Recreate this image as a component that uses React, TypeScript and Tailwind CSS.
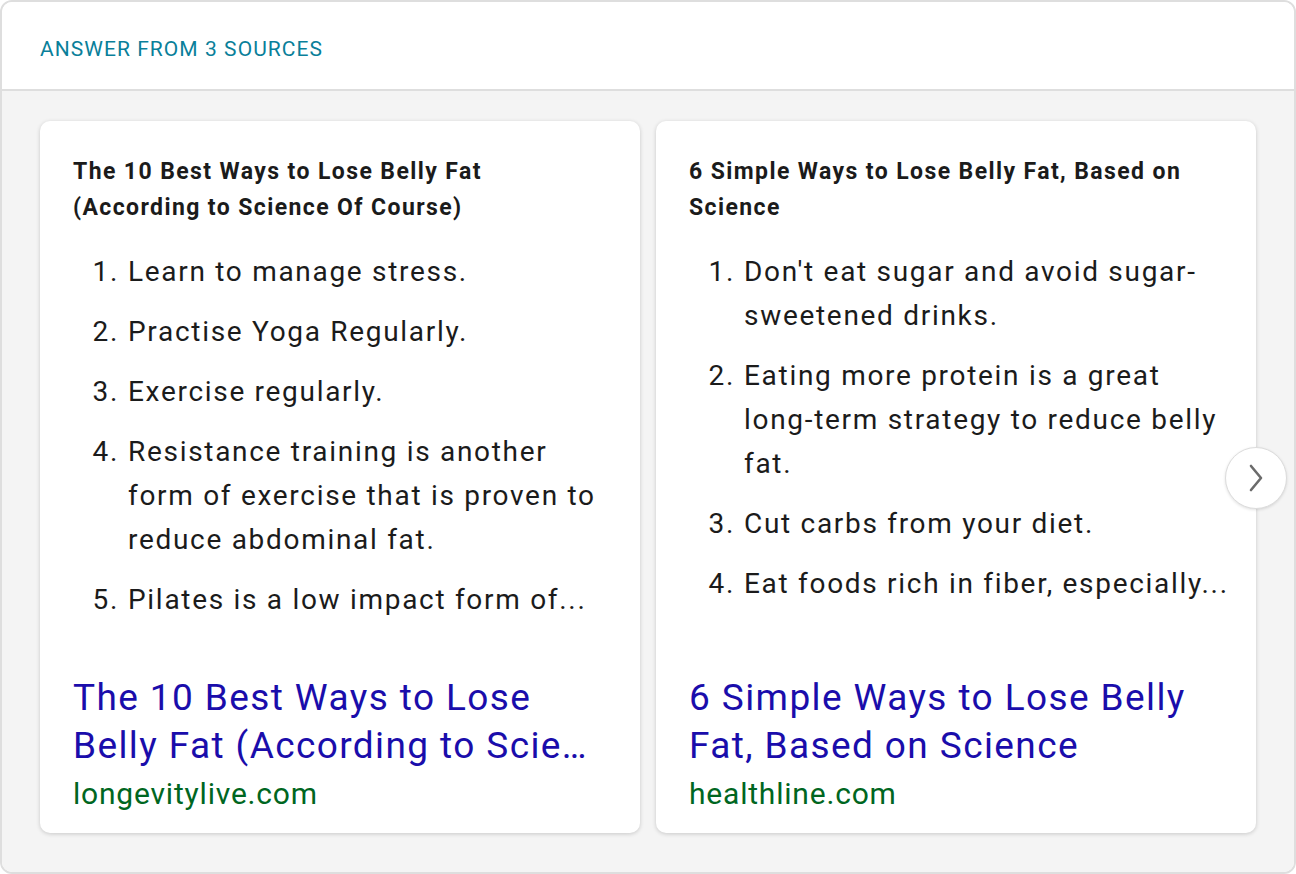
import React from "react";

const cards = [
  {
    title: "The 10 Best Ways to Lose Belly Fat (According to Science Of Course)",
    items: [
      "Learn to manage stress.",
      "Practise Yoga Regularly.",
      "Exercise regularly.",
      "Resistance training is another form of exercise that is proven to reduce abdominal fat.",
      "Pilates is a low impact form of...",
    ],
    linkLines: ["The 10 Best Ways to Lose", "Belly Fat (According to Science Of Course)"],
    domain: "longevitylive.com",
  },
  {
    title: "6 Simple Ways to Lose Belly Fat, Based on Science",
    items: [
      "Don't eat sugar and avoid sugar-sweetened drinks.",
      "Eating more protein is a great long-term strategy to reduce belly fat.",
      "Cut carbs from your diet.",
      "Eat foods rich in fiber, especially...",
    ],
    linkLines: ["6 Simple Ways to Lose Belly", "Fat, Based on Science"],
    domain: "healthline.com",
  },
];

export default function App() {
  return (
    <div
      className="relative w-[1296px] h-[874px] bg-white"
      style={{ fontFamily: "Roboto, 'Noto Sans', Arial, sans-serif" }}
    >
      <div className="h-full flex flex-col border-2 border-[#dedede] rounded-[12px] overflow-hidden">
        <div className="h-[89px] shrink-0 bg-white border-b-2 border-[#dedede] pl-[38px] pt-[32px]">
          <div className="text-[21px] leading-[30px] text-[#0a7f9a] tracking-[1.05px]">
            ANSWER FROM 3 SOURCES
          </div>
        </div>
        <div className="flex-1 bg-[#f4f4f4] pl-[38px] pt-[30px] flex gap-4 overflow-hidden">
          {cards.map((c, i) => (
            <div
              key={i}
              className="w-[600px] h-[712px] shrink-0 bg-white rounded-[10px] shadow-[0_1px_4px_rgba(0,0,0,0.18)] flex flex-col pt-[33px] pl-[33px] pr-[30px] pb-[15px]"
            >
              <div className="text-[23px] leading-[36px] font-bold text-[#1b1b1b] tracking-[1.4px]">
                {c.title}
              </div>
              <ol className="mt-6 mr-[-8px] flex flex-col gap-4 text-[28px] leading-[44px] text-[#1b1b1b] tracking-[1.7px]">
                {c.items.map((it, j) => (
                  <li key={j} className="flex">
                    <span className="w-[55px] shrink-0 text-right pr-[9px]">{j + 1}.</span>
                    <span>{it}</span>
                  </li>
                ))}
              </ol>
              <div className="mt-auto">
                <div className="text-[37px] leading-[48px] text-[#1a0dab] tracking-[1.4px] pr-[20px]">
                  {c.linkLines.map((l, k) => (
                    <div key={k} className="whitespace-nowrap overflow-hidden text-ellipsis">
                      {l}
                    </div>
                  ))}
                </div>
                <div className="text-[30px] leading-[48px] text-[#006621] tracking-[0.8px]">
                  {c.domain}
                </div>
              </div>
            </div>
          ))}
        </div>
      </div>
      <div className="absolute left-[1225px] top-[447px] w-[62px] h-[62px] rounded-full bg-white border border-[#dcdcdc] shadow-[0_1px_3px_rgba(0,0,0,0.12)] flex items-center justify-center">
        <svg width="20" height="32" viewBox="0 0 20 32" fill="none">
          <path d="M5 4 L15 16 L5 28" stroke="#6b6b6b" strokeWidth="2.6" strokeLinecap="round" strokeLinejoin="round" />
        </svg>
      </div>
    </div>
  );
}
